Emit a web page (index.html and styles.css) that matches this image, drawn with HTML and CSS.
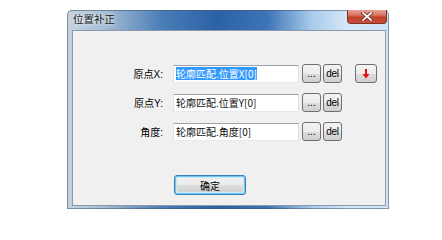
FILE: index.html
```html
<!DOCTYPE html>
<html>
<head>
<meta charset="utf-8">
<link rel="stylesheet" href="styles.css">
</head>
<body>
<div class="window">
  <div class="titlebar">
    <span class="title">位置补正</span>
    <div class="close">
      <svg width="14" height="9" viewBox="0 0 14 9"><path d="M3 1 L11 8 M11 1 L3 8" stroke="#5a2a22" stroke-width="3.2" stroke-linecap="square"/><path d="M3 1 L11 8 M11 1 L3 8" stroke="#ffffff" stroke-width="1.8" stroke-linecap="square"/></svg>
    </div>
  </div>
  <div class="client">
    <div class="form">
      <div class="row">
        <span class="label">原点X:</span>
        <div class="field"><span class="sel">轮廓匹配.位置X[0]</span></div>
        <button class="btn dots">...</button>
        <button class="btn del">del</button>
        <button class="btn arrow"><svg width="8" height="10" viewBox="0 0 8 10"><rect x="3" y="0" width="2" height="6" fill="#e01010"/><path d="M0.5 5 L7.5 5 L4 9.5 Z" fill="#e01010"/></svg></button>
      </div>
      <div class="row">
        <span class="label">原点Y:</span>
        <div class="field"><span>轮廓匹配.位置Y[0]</span></div>
        <button class="btn dots">...</button>
        <button class="btn del">del</button>
      </div>
      <div class="row">
        <span class="label">角度:</span>
        <div class="field"><span>轮廓匹配.角度[0]</span></div>
        <button class="btn dots">...</button>
        <button class="btn del">del</button>
      </div>
    </div>
    <button class="ok">确定</button>
  </div>
</div>
</body>
</html>
```
FILE: styles.css
```css
* { box-sizing: border-box; }
html, body { margin: 0; padding: 0; background: #ffffff; }
body {
  font-family: "Liberation Sans", "Noto Sans CJK SC", sans-serif;
  font-size: 10px;
  color: #000;
}
.window {
  margin: 10px 0 0 67px;
  width: 322px;
  height: 199px;
  border-radius: 5px 5px 0 0;
  background:
    linear-gradient(to right, #c6d2df 0px, #a9bfd6 35px, #4a7db7 95px, #2b62a6 150px, #3c74b6 200px, #a9cbec 245px, #d5e7f7 280px, #cfe3f5 322px);
  box-shadow: inset 0 0 0 1px rgba(60, 85, 115, 0.55);
  display: flex;
  flex-direction: column;
}
.titlebar {
  height: 20px;
  display: flex;
  align-items: flex-start;
  justify-content: space-between;
  padding-left: 6px;
}
.title {
  font-family: "Noto Sans CJK SC", sans-serif;
  font-size: 10.5px;
  line-height: 13px;
  margin-top: 2px;
  color: #1a1a1a;
  text-shadow: 0 0 3px rgba(255,255,255,0.9), 0 0 6px rgba(255,255,255,0.6);
}
.close {
  width: 40px;
  height: 14px;
  margin-right: 2px;
  border: 1px solid #7d3226;
  border-top: none;
  border-radius: 0 0 4px 4px;
  background: linear-gradient(to bottom, #e7a497 0%, #d9735f 40%, #c2412a 55%, #c9503a 100%);
  display: flex;
  align-items: center;
  justify-content: center;
}
.client {
  flex: 1;
  margin: 0 3px 3px 5px;
  background: #f0f0f0;
  border: 1px solid #8c9aab;
  padding-top: 33px;
  display: flex;
  flex-direction: column;
}
.form {
  display: flex;
  flex-direction: column;
  gap: 10px;
}
.row {
  display: flex;
  align-items: center;
  height: 19px;
}
.label {
  width: 90px;
  text-align: right;
  font-size: 10px;
}
.field {
  margin-left: 10px;
  width: 126px;
  height: 18px;
  background: #ffffff;
  border: 1px solid #abadb3;
  border-top-color: #9fa2a9;
  border-right-color: #dbdfe6;
  border-bottom-color: #e3e9ef;
  border-left-color: #e2e3ea;
  padding-left: 2px;
  display: flex;
  align-items: center;
  font-family: "Noto Sans CJK SC", sans-serif;
  font-size: 10px;
  color: #111;
}
.sel {
  background: #3399ff;
  color: #ffffff;
  line-height: 13px;
}
.btn {
  height: 19px;
  width: 19px;
  padding: 0;
  border: 1px solid #707070;
  border-radius: 3px;
  background: linear-gradient(to bottom, #f3f3f3 0%, #ebebeb 50%, #dddddd 51%, #cfcfcf 100%);
  font-family: "Liberation Sans", sans-serif;
  color: #000;
  display: flex;
  align-items: center;
  justify-content: center;
}
.dots {
  margin-left: 3px;
  font-size: 10px;
  align-items: flex-end;
  padding-bottom: 3px;
  line-height: 10px;
}
.del {
  margin-left: 2px;
  font-size: 10px;
  letter-spacing: -0.2px;
}
.arrow {
  margin-left: 13px;
  width: 22px;
}
.ok {
  margin: 34px 0 0 101px;
  width: 72px;
  height: 20px;
  padding: 0;
  border: 1px solid #3c7fb1;
  border-radius: 3px;
  background: linear-gradient(to bottom, #f2f2f2 0%, #ebebeb 50%, #dddddd 51%, #cfcfcf 100%);
  box-shadow: inset 0 0 0 1px #6fc6ee, inset 0 0 0 2px #c9e9f8;
  font-family: "Noto Sans CJK SC", sans-serif;
  font-size: 10px;
  color: #000;
}
```
